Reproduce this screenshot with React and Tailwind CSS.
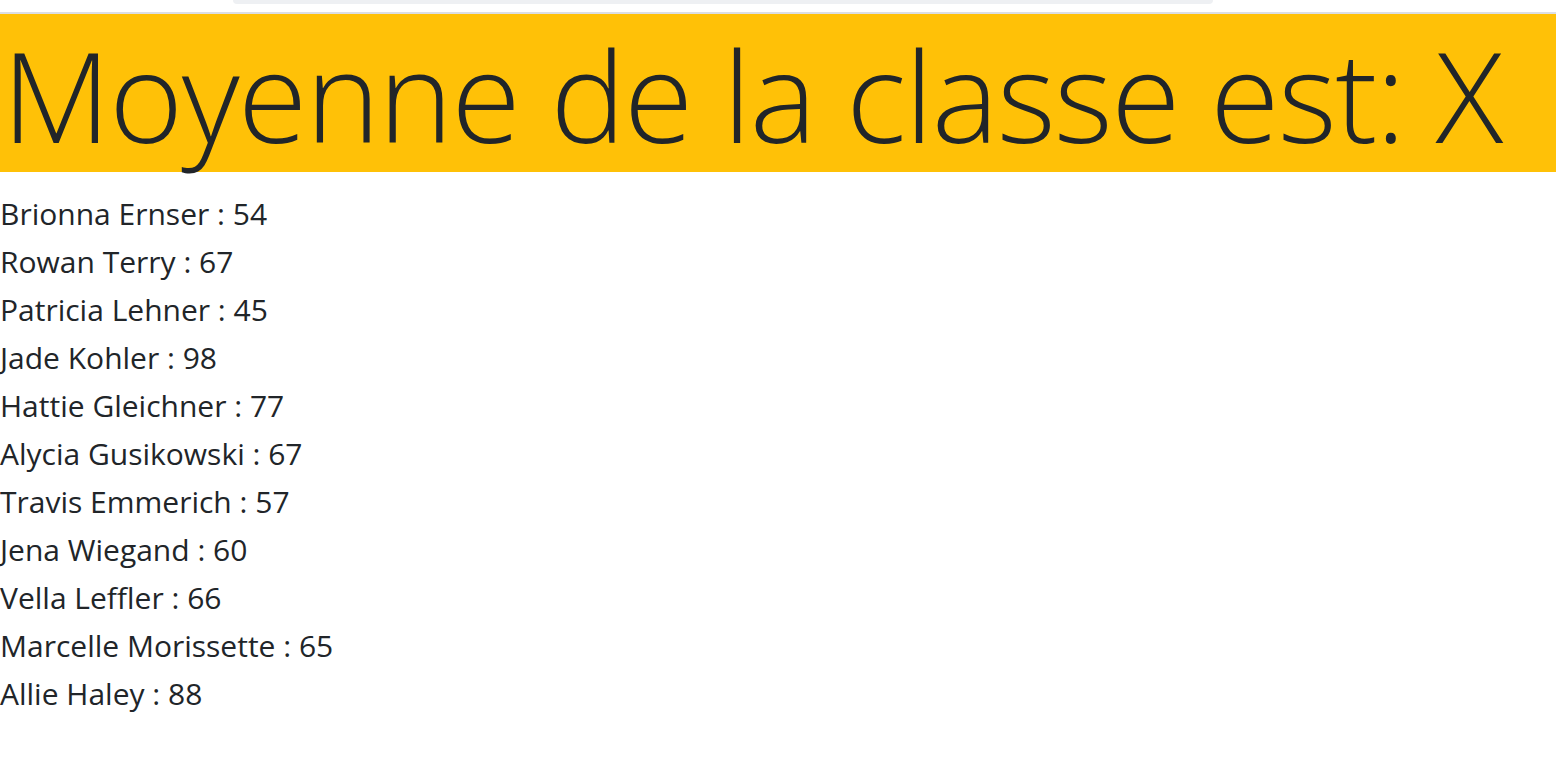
import React from 'react';

// Liste des élèves et leurs notes
const eleves = [
  { nom: 'Brionna Ernser', note: 54 },
  { nom: 'Rowan Terry', note: 67 },
  { nom: 'Patricia Lehner', note: 45 },
  { nom: 'Jade Kohler', note: 98 },
  { nom: 'Hattie Gleichner', note: 77 },
  { nom: 'Alycia Gusikowski', note: 67 },
  { nom: 'Travis Emmerich', note: 57 },
  { nom: 'Jena Wiegand', note: 60 },
  { nom: 'Vella Leffler', note: 66 },
  { nom: 'Marcelle Morissette', note: 65 },
  { nom: 'Allie Haley', note: 88 },
];

const App = () => {
  return (
    <div className="min-h-screen bg-white text-[#212529] font-['Open_Sans',sans-serif]">
      {/* Barre du haut */}
      <div className="h-3 flex">
        <div className="ml-[233px] w-[980px] h-[4px] bg-[#eef0f3] rounded-b-[8px]" />
      </div>
      <div className="h-[2px] bg-[#dcdfe3]" />

      {/* Header */}
      <h1 className="bg-[#ffc107] h-[158px] pt-[3px] text-[126px] leading-[155px] font-light pl-[2px] whitespace-nowrap tracking-[-1.5px]">
        Moyenne de la classe est: X
      </h1>

      {/* Liste des notes */}
      <ul className="mt-[18px]">
        {eleves.map((eleve) => (
          <li key={eleve.nom} className="text-[30px] leading-[48px]">
            {eleve.nom} : {eleve.note}
          </li>
        ))}
      </ul>
    </div>
  );
};

export default App;
